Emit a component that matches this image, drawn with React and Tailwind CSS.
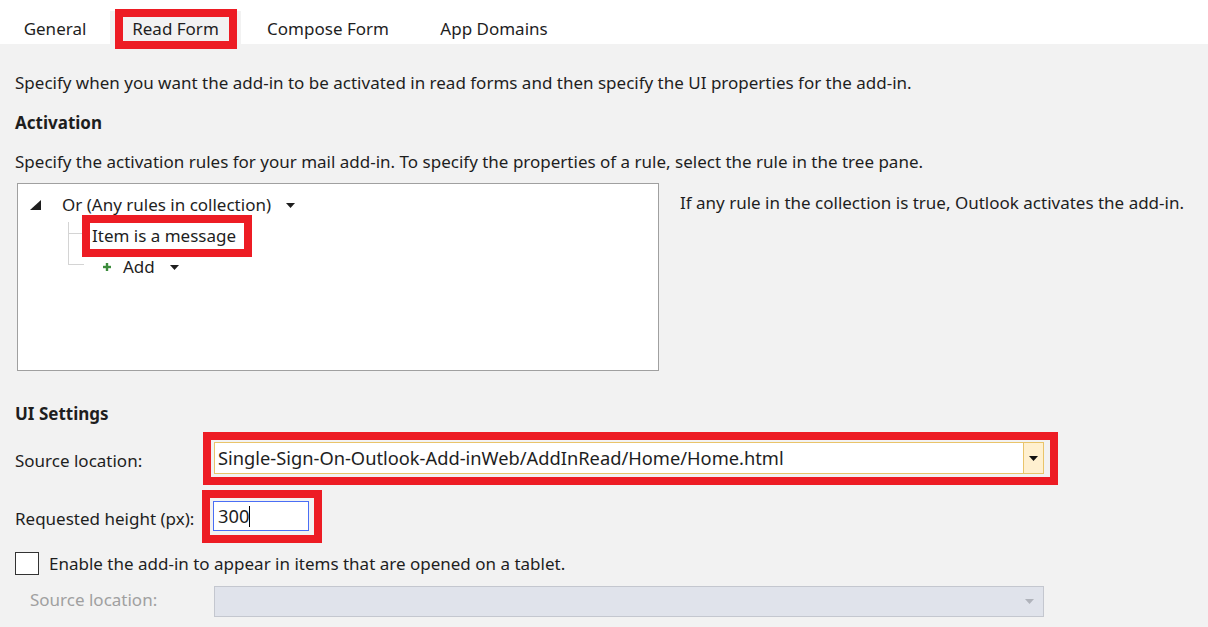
import React from "react";

const font = { fontFamily: '"Noto Sans", "Open Sans", sans-serif' };

function Caret({ color = "#1e1e1e" }) {
  return (
    <svg width="9" height="5" viewBox="0 0 9 5" className="block">
      <polygon points="0,0 9,0 4.5,5" fill={color} />
    </svg>
  );
}

function RedBox({ className = "", children }) {
  return (
    <div className={"border-[8px] border-[#ed1c24] " + className}>{children}</div>
  );
}

export default function App() {
  return (
    <div
      className="w-[1208px] h-[627px] overflow-hidden bg-[#f2f2f2] text-[#1e1e1e] text-[17px]"
      style={font}
    >
      {/* Tabs */}
      <div className="h-[44px] bg-white flex items-end">
        <div className="w-[110px] h-[33px] pt-[2px] flex items-center justify-center">General</div>
        <div className="relative w-[131px] h-[33px] pt-[2px] bg-[#f2f2f2] flex items-center justify-center">
          Read Form
          <div className="absolute left-[5px] -top-[2px] w-[122px] h-[40px] border-[8px] border-[#ed1c24]" />
        </div>
        <div className="w-[174px] h-[33px] pt-[2px] flex items-center justify-center">Compose Form</div>
        <div className="w-[158px] h-[33px] pt-[2px] flex items-center justify-center">App Domains</div>
      </div>

      {/* Body */}
      <div className="pl-[15px]">
        <div className="mt-[27px] h-[24px] leading-[24px]">
          Specify when you want the add-in to be activated in read forms and then specify the UI properties for the add-in.
        </div>
        <div className="mt-[16px] h-[24px] leading-[24px] font-bold">Activation</div>
        <div className="mt-[15px] h-[24px] leading-[24px]">
          Specify the activation rules for your mail add-in. To specify the properties of a rule, select the rule in the tree pane.
        </div>

        <div className="mt-[9px] flex items-start">
          <div className="ml-[2px] w-[642px] h-[188px] bg-white border border-[#a0a0a0]">
            {/* Row 1 */}
            <div className="mt-[8px] h-[26px] flex items-center pl-[12px]">
              <svg width="11" height="10" viewBox="0 0 11 10" className="block">
                <polygon points="11,0 11,10 0,10" fill="#1e1e1e" />
              </svg>
              <span className="ml-[21px]">Or (Any rules in collection)</span>
              <span className="ml-[15px]">
                <Caret />
              </span>
            </div>
            {/* Row 2 */}
            <div className="-mt-[3px] flex pl-[50px]">
              <div className="w-[14px] flex flex-col">
                <div className="h-[7px]" />
                <div className="h-[12px] border-l border-b border-[#d4d4d4]" />
                <div className="flex-1 border-l border-[#d4d4d4]" />
              </div>
              <RedBox className="w-[170px] h-[42px] flex items-center pl-[2px]">
                <span>Item is a message</span>
              </RedBox>
            </div>
            {/* Row 3 */}
            <div className="flex pl-[50px] h-[22px]">
              <div className="w-[16px] flex flex-col">
                <div className="h-[8px] border-l border-b border-[#d4d4d4]" />
              </div>
              <div className="flex items-center h-[20px]">
                <svg width="8" height="8" viewBox="0 0 8 8" className="block ml-[19px]">
                  <rect x="2.8" y="0" width="2.4" height="8" fill="#3c8c3c" />
                  <rect x="0" y="2.8" width="8" height="2.4" fill="#3c8c3c" />
                </svg>
                <span className="ml-[12px]">Add</span>
                <span className="ml-[15px]">
                  <Caret />
                </span>
              </div>
            </div>
          </div>
          <div className="ml-[21px] mt-[8px] h-[24px] leading-[24px]">
            If any rule in the collection is true, Outlook activates the add-in.
          </div>
        </div>

        <div className="mt-[31px] h-[24px] leading-[24px] font-bold">UI Settings</div>

        {/* Source location */}
        <div className="mt-[6px] flex items-center">
          <div className="w-[188px] pt-[4px]">Source location:</div>
          <RedBox className="w-[855px] h-[53px] pl-[3px] pt-[2px]">
            <div className="w-[830px] h-[32px] bg-white border border-[#e9c46a] flex">
              <div className="flex-1 flex items-center pl-[3px] whitespace-nowrap text-[18.3px]">
                Single-Sign-On-Outlook-Add-inWeb/AddInRead/Home/Home.html
              </div>
              <div className="w-[20px] bg-[#fff0cf] border-l border-[#e9c46a] flex items-center justify-center">
                <Caret color="#111" />
              </div>
            </div>
          </RedBox>
        </div>

        {/* Requested height */}
        <div className="mt-[5px] flex items-center">
          <div className="w-[187px] pt-[4px]">Requested height (px):</div>
          <RedBox className="w-[120px] h-[53px] pl-[3px] pt-[3px]">
            <div className="w-[96px] h-[30px] bg-white border border-[#4a6ef5] flex items-center pl-[4px] text-[18.3px]">
              <span>300</span>
              <span className="w-px h-[21px] bg-black" />
            </div>
          </RedBox>
        </div>

        {/* Checkbox */}
        <div className="mt-[8px] flex items-center">
          <div className="w-[24px] h-[23px] bg-white border-[1.5px] border-[#333]" />
          <span className="ml-[10px]">Enable the add-in to appear in items that are opened on a tablet.</span>
        </div>

        {/* Disabled source */}
        <div className="mt-[9px] flex items-center">
          <div className="w-[199px] pl-[15px] pb-[3px] text-[#a0a0a0]">Source location:</div>
          <div className="w-[830px] h-[31px] bg-[#e0e3eb] border border-[#c4c7cf] flex items-center justify-end pr-[9px]">
            <Caret color="#b0b3bb" />
          </div>
        </div>
      </div>
    </div>
  );
}
